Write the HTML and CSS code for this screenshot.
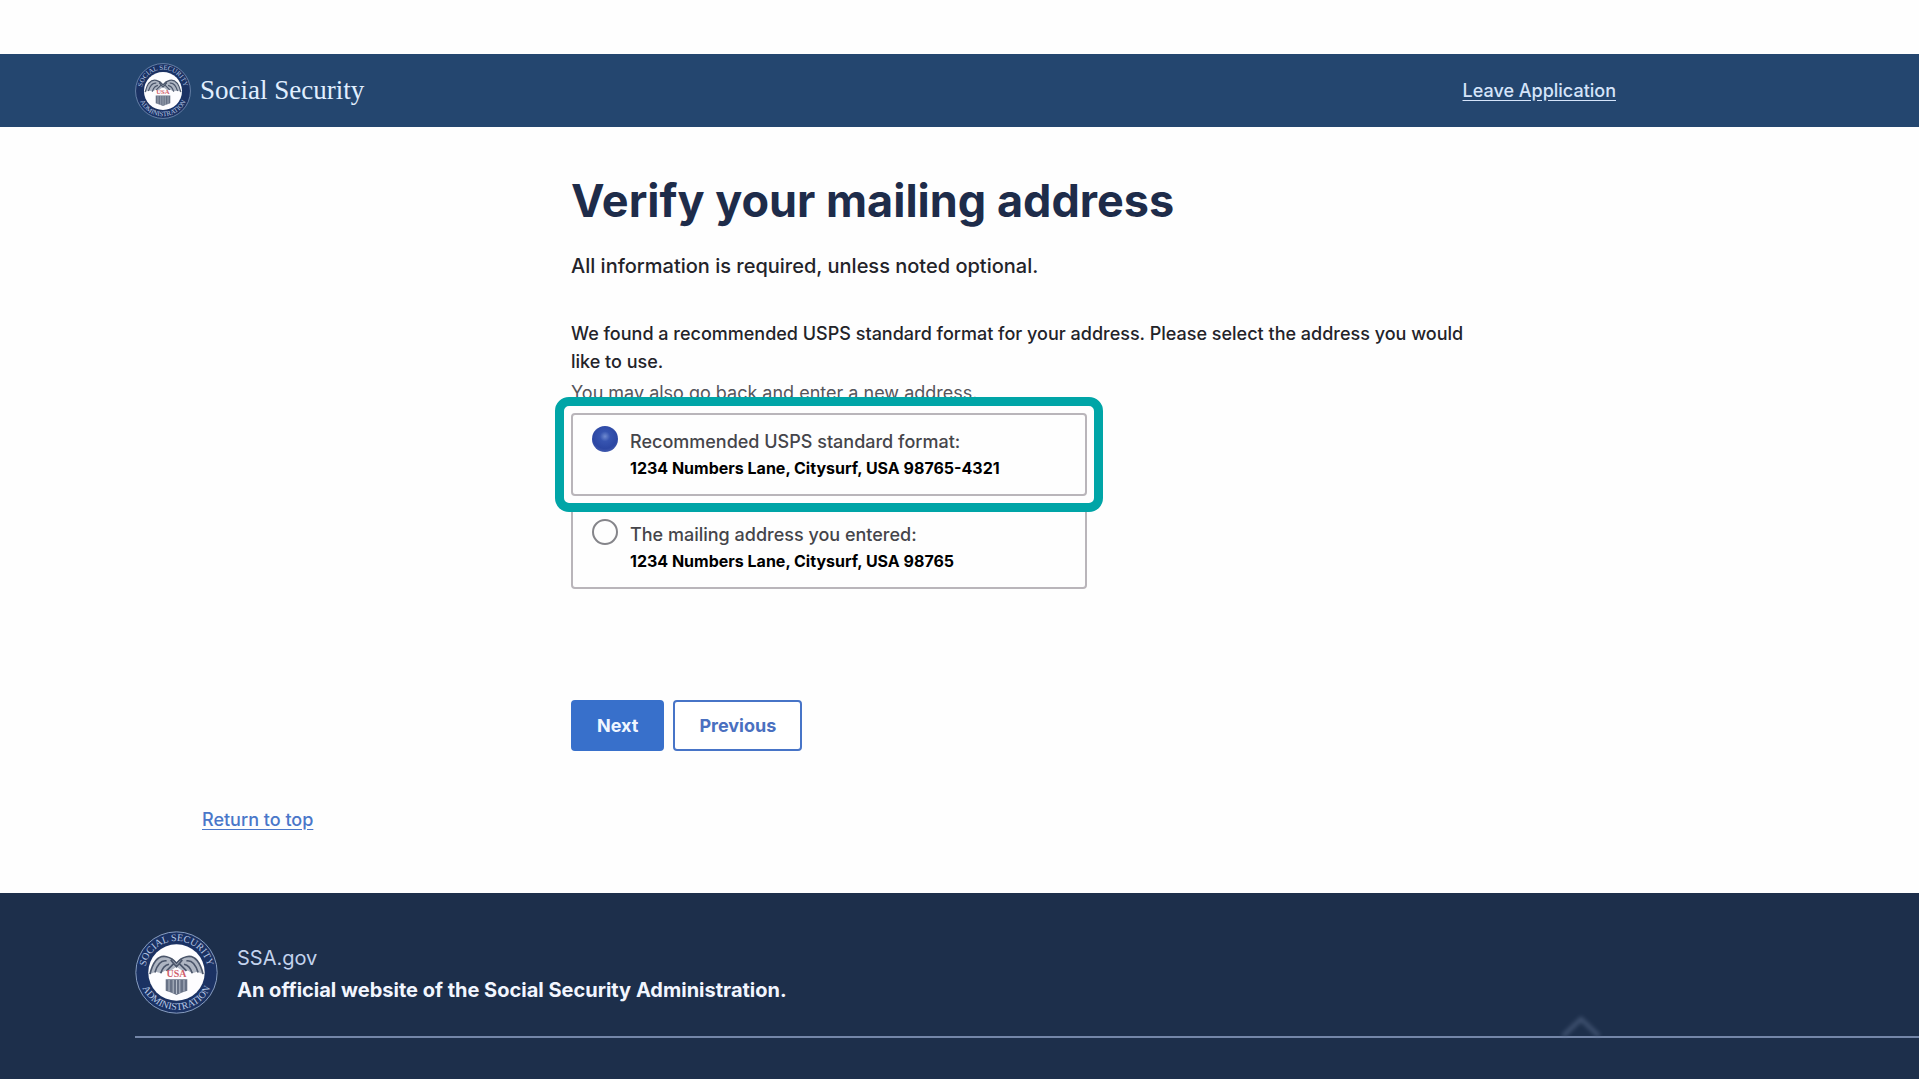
FILE: index.html
```html
<!DOCTYPE html>
<html lang="en">
<head>
    <meta charset="UTF-8">
    <meta name="viewport" content="width=device-width, initial-scale=1.0">
    <title>Verify your mailing address</title>
    <link rel="stylesheet" href="styles.css">
</head>
<body id="top">
    <!-- Shared seal, used in the header and footer -->
    <svg class="sprite" aria-hidden="true">
        <defs>
            <path id="arc-top" d="M12 50a38 38 0 0 1 76 0"/>
            <path id="arc-bottom" d="M5 50a45 45 0 0 0 90 0"/>
            <symbol id="seal" viewBox="0 0 100 100">
                <circle cx="50" cy="50" r="49" fill="#1b3263" stroke="#9db3d6" stroke-width="1"/>
                <circle cx="50" cy="50" r="34" fill="#fdfdff"/>
                <g class="seal-text">
                    <text><textPath href="#arc-top" startOffset="50%">SOCIAL SECURITY</textPath></text>
                    <text><textPath href="#arc-bottom" startOffset="50%">ADMINISTRATION</textPath></text>
                </g>
                <path d="M50 38C43 29 30 28 23 39L18 52L25 49L31 51L36 48L43 48L50 43L57 48L64 48L69 51L75 49L82 52L77 39C70 28 57 29 50 38Z" fill="#aeb5c2"/>
                <path d="M18 52C22 36 29 29 38 31C43 32 47 35 50 39C53 35 57 32 62 31C71 29 78 36 82 52M24 50C27 40 32 35 38 36M31 51C33 44 36 41 41 40M38 48L46 40M76 50C73 40 68 35 62 36M69 51C67 44 64 41 59 40M62 48L54 40M43 35L50 43L57 35" fill="none" stroke="#4b566b" stroke-width="2"/>
                <path d="M37 58H63V72Q57 74 50 77Q43 74 37 72Z" fill="#687286"/>
                <path d="M41 59V73M46 59V75M50 59V76M54 59V75M59 59V73" stroke="#c5ccd8" stroke-width="1"/>
                <text x="50" y="56" class="seal-usa">USA</text>
            </symbol>
        </defs>
    </svg>

    <header>
        <a class="brand" href="#">
            <svg class="brand-seal" aria-hidden="true"><use href="#seal"/></svg>
            <span>Social Security</span>
        </a>
        <a class="leave-link" href="#">Leave Application</a>
    </header>

    <main>
        <form class="content">
            <h1>Verify your mailing address</h1>
            <p class="intro">All information is required, unless noted optional.</p>

            <p class="question" id="question">We found a recommended USPS standard format for your address. Please select the address you would like to use.</p>
            <p class="hint">You may also go back and enter a new address.</p>

            <div class="options" role="radiogroup" aria-labelledby="question">
                <div class="option highlight">
                    <input type="radio" name="address" id="recommended" checked>
                    <label for="recommended">Recommended USPS standard format:
                        <strong>1234 Numbers Lane, Citysurf, USA 98765-4321</strong>
                    </label>
                </div>
                <div class="option">
                    <input type="radio" name="address" id="entered">
                    <label for="entered">The mailing address you entered:
                        <strong>1234 Numbers Lane, Citysurf, USA 98765</strong>
                    </label>
                </div>
            </div>

            <div class="actions">
                <button type="button" class="primary">Next</button>
                <button type="button">Previous</button>
            </div>
        </form>
        <a class="return-link" href="#top">Return to top</a>
    </main>

    <footer>
        <div class="identity">
            <svg class="footer-seal" aria-hidden="true"><use href="#seal"/></svg>
            <div class="identity-text">
                <p>SSA.gov</p>
                <p><strong>An official website of the Social Security Administration.</strong></p>
            </div>
        </div>
        <div class="rule">
            <svg class="chevron" viewBox="0 0 42 24" aria-hidden="true"><path d="M3 22L21 5L39 22"/></svg>
        </div>
    </footer>
</body>
</html>
```

FILE: styles.css
```css
* {
    box-sizing: border-box;
}

body {
    font-family: Inter, "Liberation Sans", sans-serif;
    margin: 0;
    padding-top: 54px;
    min-height: 100vh;
    display: flex;
    flex-direction: column;
    background: #fefefe;
    color: #232329;
    font-size: 18px;
}

h1, p {
    margin: 0;
}

.sprite {
    position: absolute;
    width: 0;
    height: 0;
}

.seal-text {
    font-family: "Liberation Serif", serif;
    font-size: 12px;
    fill: #b9c9e6;
    text-anchor: middle;
}

.seal-usa {
    font-family: "Liberation Serif", serif;
    font-size: 12px;
    font-weight: bold;
    fill: #d0606c;
    text-anchor: middle;
}

/* Header */
header {
    display: flex;
    align-items: center;
    justify-content: space-between;
    height: 73px;
    padding: 0 303px 0 135px;
    background: #24466f;
}

.brand {
    display: flex;
    align-items: center;
    gap: 9px;
    color: #e0efff;
    font-family: "Liberation Serif", serif;
    font-size: 27px;
    text-decoration: none;
}

.brand-seal {
    width: 56px;
    height: 56px;
}

.leave-link {
    color: #d5e4fa;
    font-weight: 500;
    text-underline-offset: 3px;
}

/* Form */
main {
    padding: 46px 135px 61px 202px;
}

.content {
    max-width: 1270px;
    padding-left: 369px;
}

h1 {
    color: #1e2c4a;
    font-size: 45px;
    font-weight: 700;
    line-height: 56px;
}

.intro {
    margin-top: 23px;
    font-size: 20px;
    font-weight: 500;
    line-height: 28px;
}

.question {
    margin-top: 40px;
    font-weight: 500;
    line-height: 28px;
}

.hint {
    margin-top: 5px;
    line-height: 24px;
    color: #55555b;
}

.options {
    display: flex;
    flex-direction: column;
    gap: 10px;
    max-width: 516px;
    margin-top: 8px;
}

.option {
    position: relative;
    display: flex;
    align-items: flex-start;
    gap: 12px;
    padding: 11px 19px 13px;
    border: 2px solid #b9b5ba;
    border-radius: 4px;
}

.option input {
    appearance: none;
    flex: none;
    width: 26px;
    height: 26px;
    margin: 0;
    border: 2px solid #85858a;
    border-radius: 50%;
}

.option input:checked {
    border: none;
    background: radial-gradient(circle at 50% 40%, #6f8ad0 0, #3654b0 25%, #2c47a3 60%, #5c73bd 100%);
}

.option label {
    padding-top: 3px;
    line-height: 26px;
    font-weight: 500;
    color: #45454a;
}

.option strong {
    display: block;
    font-size: 16px;
    font-weight: 700;
    color: #000;
}

.highlight::after {
    content: "";
    position: absolute;
    inset: -18px;
    border: 9px solid #00a5a7;
    border-radius: 14px;
    pointer-events: none;
    z-index: 1;
}

.actions {
    display: flex;
    gap: 9px;
    margin-top: 111px;
}

button {
    height: 51px;
    padding: 0 24px;
    border: 2px solid #4774c7;
    border-radius: 4px;
    background: #fff;
    color: #4a70c0;
    font: bold 18px Inter, "Liberation Sans", sans-serif;
    cursor: pointer;
}

.primary {
    border-color: #3870cb;
    background: #3870cb;
    color: #f0f6ff;
}

.return-link {
    display: inline-block;
    margin-top: 57px;
    line-height: 24px;
    color: #4a77c9;
    font-weight: 500;
    text-underline-offset: 3px;
}

/* Footer */
footer {
    flex: 1;
    padding: 38px 0 42px 135px;
    background: #1d2f4b;
}

.identity {
    display: flex;
    align-items: center;
    gap: 19px;
    color: #c3d3ed;
    font-size: 20px;
    line-height: 32px;
}

.identity-text {
    padding-top: 3px;
}

.identity strong {
    color: #f2f6ff;
}

.footer-seal {
    width: 83px;
    height: 83px;
}

.rule {
    position: relative;
    margin-top: 22px;
    border-top: 2px solid #7486a8;
}

.chevron {
    position: absolute;
    right: 317px;
    bottom: 0;
    width: 42px;
    height: 24px;
    fill: none;
    stroke: #5a6c8c;
    stroke-width: 4;
    opacity: 0.6;
    filter: blur(2px);
}
```
